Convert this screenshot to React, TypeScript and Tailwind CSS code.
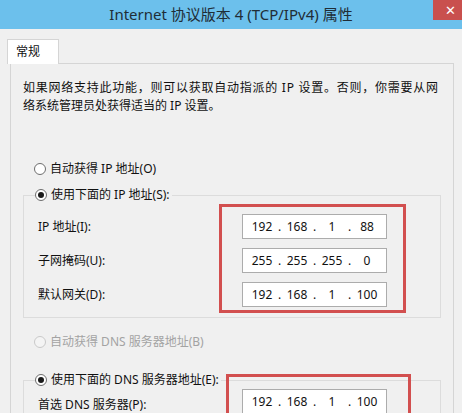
import React from "react";

const FONT = '"Noto Sans", "Noto Sans CJK SC", sans-serif';

function Radio({ checked, disabled, label }: { checked?: boolean; disabled?: boolean; label: string }) {
  return (
    <div className="flex items-center h-[18px] bg-[#f0f0f0] pr-[2px]">
      <span
        className={
          "flex items-center justify-center w-[12px] h-[12px] rounded-full border " +
          (disabled ? "border-[#c9c9c9] bg-[#f4f4f4]" : "border-[#6e6e6e] bg-white")
        }
      >
        {checked && <span className="w-[6px] h-[6px] rounded-full bg-[#1a1a1a]" />}
      </span>
      <span className={"ml-[4px] text-[12px] leading-[18px] " + (disabled ? "text-[#a3a3a3]" : "text-[#111]")}>
        {label}
      </span>
    </div>
  );
}

function IpInput({ parts }: { parts: string[] }) {
  return (
    <div className="flex items-center w-[145px] h-[25px] border border-[#acacac] bg-white pl-[5px] text-[12px] leading-[14px] text-[#111]" style={{ fontFamily: FONT }}>
      {parts.map((p, i) => (
        <React.Fragment key={i}>
          <span className="w-[28px] text-center">{p}</span>
          {i < 3 && <span className="w-[7px] text-center">.</span>}
        </React.Fragment>
      ))}
    </div>
  );
}

export default function App() {
  return (
    <div className="w-[462px] h-[413px] overflow-hidden bg-[#f0f0f0]" style={{ fontFamily: FONT }}>
      {/* Title bar */}
      <div className="relative h-[29px] bg-[#6cc0ec] flex items-center justify-center">
        <span className="text-[15px] text-[#1f2d36] leading-none">Internet 协议版本 4 (TCP/IPv4) 属性</span>
        <div className="absolute right-0 top-0 w-[29px] h-[20px] bg-[#c9504e] flex items-center pl-[12px] text-white text-[13px] leading-none">
          ✕
        </div>
      </div>

      {/* Body */}
      <div className="pt-[10px] pl-[7px]">
        <div className="relative z-10 -mb-px w-[52px] h-[25px] border border-b-0 border-[#d5d5d5] bg-white flex items-center pl-[8px] text-[12px] text-[#111]">
          常规
        </div>
        <div className="ml-[3px] w-[444px] h-[400px] border border-[#d5d5d5] bg-[#f0f0f0] pl-[12px] pr-[12px] pt-[15px]">
          <div className="text-[12px] leading-[18px] text-[#111]">
            <div className="tracking-[0.75px]">如果网络支持此功能，则可以获取自动指派的 IP 设置。否则，你需要从网</div>
            <div>络系统管理员处获得适当的 IP 设置。</div>
          </div>

          <div className="mt-[45px] ml-[11px]">
            <Radio label="自动获得 IP 地址(O)" />
          </div>

          <fieldset className="mt-[8px] w-[418px] border border-[#dcdcdc] pl-[14px] pb-[4px]">
            <legend className="ml-[-3px]">
              <Radio checked label="使用下面的 IP 地址(S):" />
            </legend>
            <div className="flex items-start">
              <div className="w-[181px] pt-[10px] flex flex-col gap-[9px] text-[12px] text-[#111]">
                <div className="h-[25px] flex items-center">IP 地址(I):</div>
                <div className="h-[25px] flex items-center">子网掩码(U):</div>
                <div className="h-[25px] flex items-center">默认网关(D):</div>
              </div>
              <div className="w-[187px] border-[3px] border-[#d24f4f] pl-[20px] pt-[7px] pb-[3px] flex flex-col gap-[9px]">
                <IpInput parts={["192", "168", "1", "88"]} />
                <IpInput parts={["255", "255", "255", "0"]} />
                <IpInput parts={["192", "168", "1", "100"]} />
              </div>
            </div>
          </fieldset>

          <div className="mt-[15px] ml-[11px]">
            <Radio disabled label="自动获得 DNS 服务器地址(B)" />
          </div>

          <fieldset className="mt-[20px] w-[418px] border border-[#dcdcdc] pl-[14px] pb-[4px]">
            <legend className="ml-[-3px]">
              <Radio checked label="使用下面的 DNS 服务器地址(E):" />
            </legend>
            <div className="flex items-start">
              <div className="w-[188px] pt-[3px] flex flex-col text-[12px] text-[#111]">
                <div className="h-[25px] flex items-center">首选 DNS 服务器(P):</div>
              </div>
              <div className="mt-[-15px] w-[185px] h-[60px] border-[3px] border-[#d24f4f] pl-[13px] pt-[12px] flex flex-col">
                <IpInput parts={["192", "168", "1", "100"]} />
              </div>
            </div>
          </fieldset>
        </div>
      </div>
    </div>
  );
}
